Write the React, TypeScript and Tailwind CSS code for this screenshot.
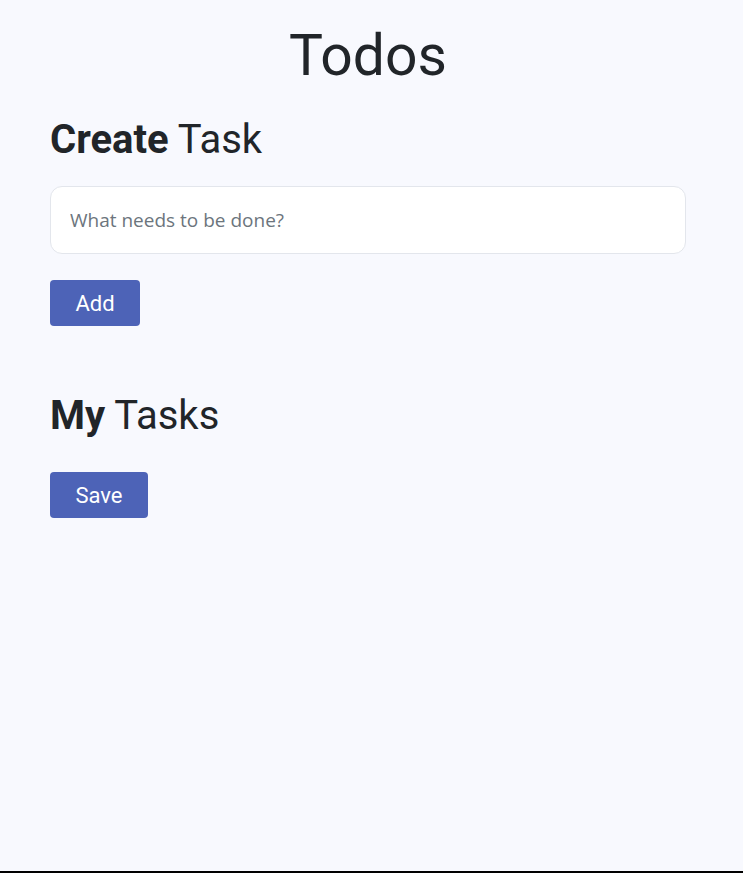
export default function App() {
  return (
    <div
      className="h-[873px] bg-[#f8f9fe] border-b-2 border-black text-[#212529]"
      style={{ fontFamily: "Roboto, 'Liberation Sans', sans-serif" }}
    >
      <div className="pl-[50px] pr-[57px] pt-[22px]">
        <h1 className="text-center text-[57px] leading-[68px] font-normal">Todos</h1>

        {/* Create */}
        <h2 className="mt-[26px] text-[40px] leading-[48px]">
          <span className="font-bold">Create</span> Task
        </h2>
        <input
          type="text"
          placeholder="What needs to be done?"
          className="mt-[22px] block w-full h-[68px] rounded-xl border border-[#e3e6ec] bg-white px-[19px] text-[19px] placeholder:text-[#6c757d] outline-none"
          style={{ fontFamily: "'Open Sans', 'Noto Sans', sans-serif" }}
        />
        <button className="mt-[26px] h-[46px] w-[90px] rounded bg-[#4d63b7] text-white text-[22px]">
          Add
        </button>

        {/* Tasks */}
        <h2 className="mt-[66px] text-[40px] leading-[48px]">
          <span className="font-bold">My</span> Tasks
        </h2>
        <button className="mt-[32px] h-[46px] w-[98px] rounded bg-[#4d63b7] text-white text-[22px]">
          Save
        </button>
      </div>
    </div>
  );
}
